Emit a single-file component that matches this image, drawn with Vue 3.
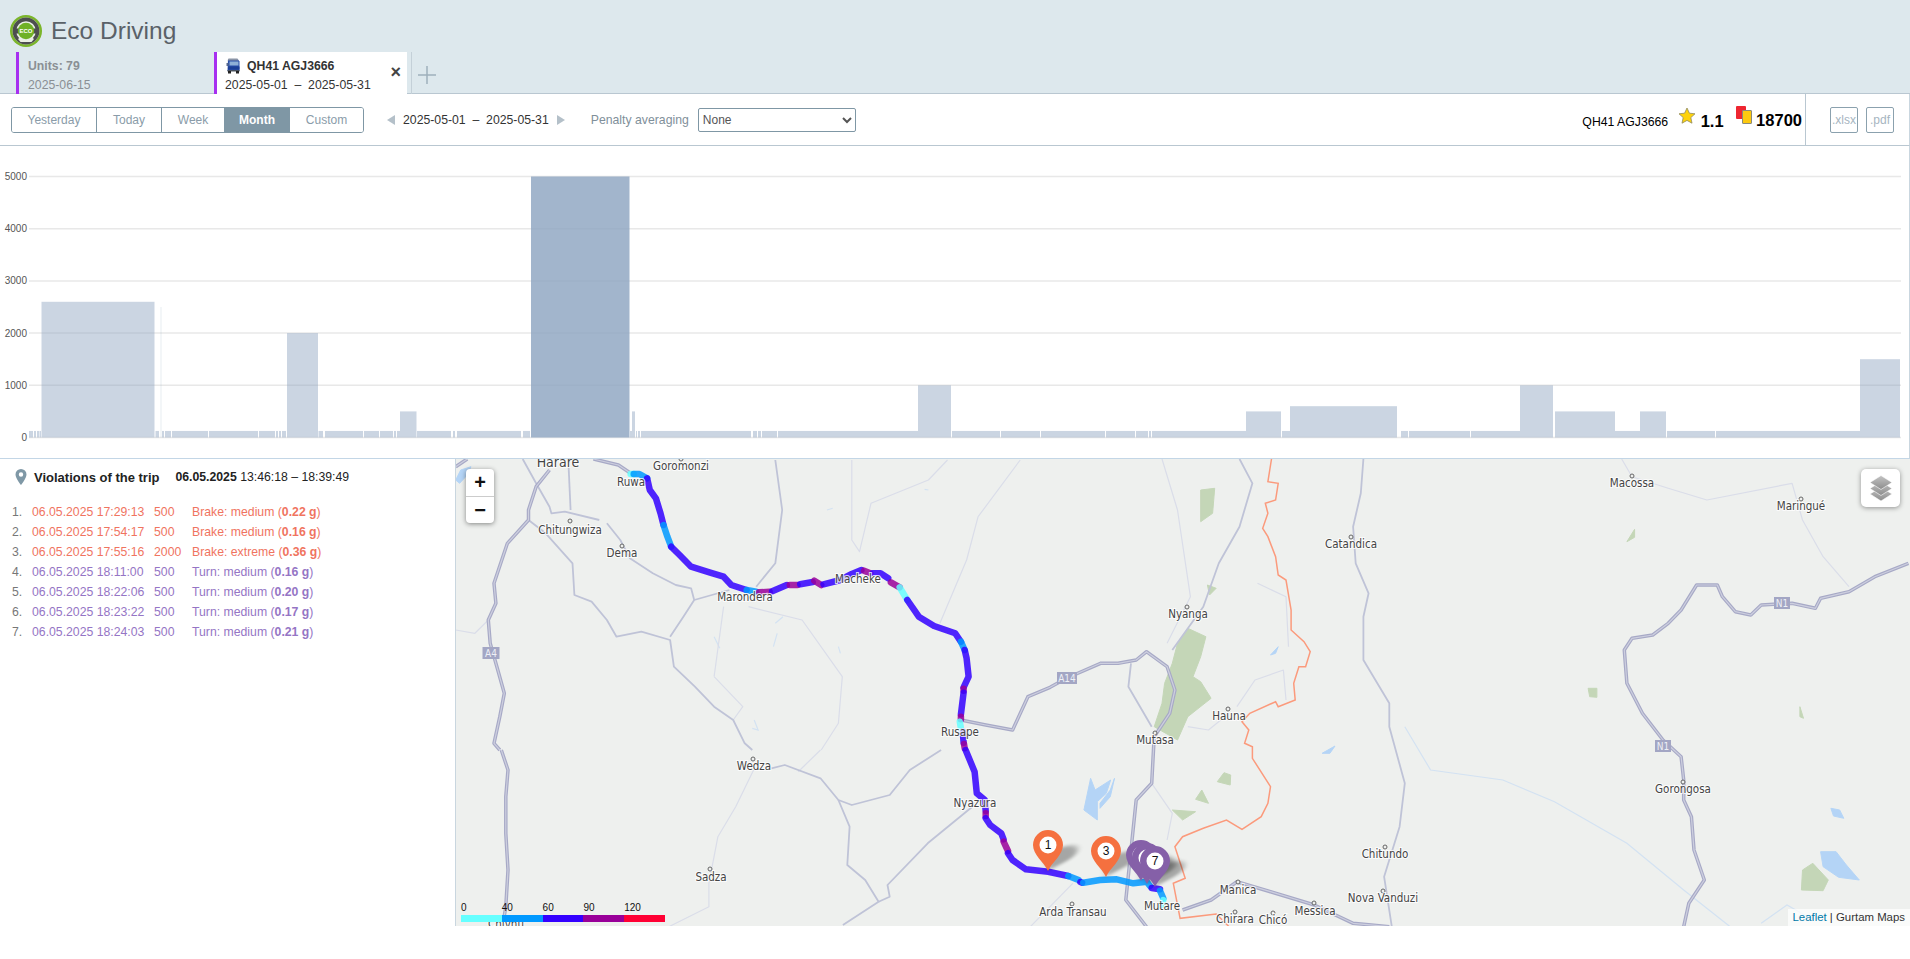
<script setup>
const presets = ["Yesterday", "Today", "Week", "Month", "Custom"];

// chart: value axis is 261px for 5000, base line at y=437.5
const baseY = 437.5;
const toH = (v) => (v / 5000) * 261;
const ticks = [0, 1000, 2000, 3000, 4000, 5000];

const low = [
  [29, 33], [34, 36], [37, 39], [39.5, 41], [155.5, 159], [162, 164], [165, 171], [172, 208],
  [209, 258], [259, 275], [276, 278], [279, 281], [282, 286], [318.5, 323], [325, 363],
  [364, 379], [380, 393], [394, 396], [397, 400], [417, 451], [453, 455], [457, 521], [523, 530],
  [630, 632], [636, 637], [638, 640], [641, 751], [753, 757], [758, 761], [762, 777], [778, 918],
  [952, 1000], [1001, 1040], [1041, 1105], [1106, 1135], [1136, 1148], [1149, 1151], [1152, 1246],
  [1282, 1290], [1401, 1408], [1409, 1470], [1471, 1520], [1615, 1640], [1667, 1715], [1716, 1860],
].map(([x1, x2]) => ({ x1, x2, value: 125 }));

const bars = [
  ...low,
  { x1: 41.5, x2: 154.5, value: 2600 },
  { x1: 160, x2: 162, value: 2500, faint: true },
  { x1: 287, x2: 318, value: 2000 },
  { x1: 400, x2: 416.5, value: 500 },
  { x1: 531, x2: 629.5, value: 5000, active: true },
  { x1: 632, x2: 635, value: 500 },
  { x1: 918, x2: 951, value: 1000 },
  { x1: 1246, x2: 1281, value: 500 },
  { x1: 1290, x2: 1397, value: 600 },
  { x1: 1520, x2: 1553, value: 1000 },
  { x1: 1555, x2: 1615, value: 500 },
  { x1: 1640, x2: 1666, value: 500 },
  { x1: 1860, x2: 1900, value: 1500 },
];

const violations = [
  { n: 1, time: "06.05.2025 17:29:13", pts: 500, label: "Brake: medium", g: "0.22 g", kind: "brake" },
  { n: 2, time: "06.05.2025 17:54:17", pts: 500, label: "Brake: medium", g: "0.16 g", kind: "brake" },
  { n: 3, time: "06.05.2025 17:55:16", pts: 2000, label: "Brake: extreme", g: "0.36 g", kind: "brake" },
  { n: 4, time: "06.05.2025 18:11:00", pts: 500, label: "Turn: medium", g: "0.16 g", kind: "turn" },
  { n: 5, time: "06.05.2025 18:22:06", pts: 500, label: "Turn: medium", g: "0.20 g", kind: "turn" },
  { n: 6, time: "06.05.2025 18:23:22", pts: 500, label: "Turn: medium", g: "0.17 g", kind: "turn" },
  { n: 7, time: "06.05.2025 18:24:03", pts: 500, label: "Turn: medium", g: "0.21 g", kind: "turn" },
];

// map geometry was traced in differently scaled views, these put it back in page px
const view = (ox, oy, sx, sy) => (flat) => {
  const out = [];
  for (let i = 0; i < flat.length; i += 2) {
    out.push(`${(ox + flat[i] / sx).toFixed(1)},${(oy + flat[i + 1] / sy).toFixed(1)}`);
  }
  return out.join(" ");
};
const a = view(450, 450, 2.613, 3);
const b = view(450, 750, 2.24, 3);
const c = view(1000, 800, 3, 3);
const d = view(1100, 450, 1.936, 3);

const mainRoads = [
  a([260, 60, 225, 110, 205, 180, 205, 210, 150, 280, 115, 400, 120, 460, 100, 510, 105, 580, 125, 660, 142, 730, 130, 800, 115, 880, 130, 900]),
  b([115, 0, 130, 60, 125, 140, 125, 250, 130, 360, 125, 470, 120, 510]),
  a([375, 27, 440, 45, 470, 68]),
  a([15, 50, 45, 27]),
  a([1335, 810, 1400, 825, 1470, 840, 1510, 740, 1568, 712, 1612, 684, 1700, 640]),
  d([0, 640, 35, 640, 70, 630, 90, 605, 130, 650, 145, 720, 135, 790, 105, 860, 100, 1000, 70, 1050, 60, 1200, 50, 1350, 90, 1430]),
  d([1565, 340, 1500, 380, 1450, 425, 1395, 445, 1385, 475, 1340, 460, 1280, 465, 1260, 495, 1230, 485, 1205, 440, 1195, 405, 1155, 405, 1125, 480, 1100, 520, 1070, 555, 1030, 565, 1015, 600, 1020, 700, 1050, 790, 1090, 870, 1125, 920, 1130, 990, 1130, 1050, 1145, 1100, 1150, 1200, 1170, 1290, 1140, 1360, 1130, 1430]),
  d([160, 1380, 215, 1350, 265, 1295, 330, 1325, 415, 1365, 490, 1420, 560, 1430]),
];

const secondaryRoads = [
  a([205, 210, 250, 250, 320, 340, 325, 435, 370, 455, 410, 510, 435, 560, 500, 545, 575, 570, 585, 650, 640, 710, 690, 770, 740, 810, 770, 880, 790, 900]),
  a([410, 220, 445, 270, 470, 325, 530, 370, 590, 405, 630, 415, 638, 450, 610, 500, 575, 560]),
  a([638, 450, 730, 420]),
  a([800, 410, 850, 340, 868, 180, 850, 30]),
  a([190, 27, 225, 100, 260, 170, 265, 190, 300, 185, 390, 210]),
  a([310, 50, 315, 180]),
  b([720, 55, 750, 45, 830, 85, 870, 150, 900, 165, 985, 135, 1030, 60, 1100, 0]),
  b([870, 150, 895, 230, 890, 345, 930, 390, 960, 455, 880, 525]),
  b([960, 455, 985, 440, 980, 405, 1070, 280, 1170, 170]),
  d([510, 27, 505, 130, 490, 230, 495, 340, 520, 430, 510, 500, 510, 630, 560, 760, 560, 830, 590, 1000, 580, 1130, 550, 1280, 565, 1430]),
  d([270, 27, 295, 100, 270, 230, 230, 340, 200, 470, 140, 600]),
  d([60, 640, 55, 710, 100, 830]),
];

const minorRoads = [
  a([1050, 30, 1050, 270, 1070, 305, 1100, 160, 1250, 90, 1300, 30]),
  a([1490, 30, 1380, 200, 1350, 330, 1280, 520]),
  a([690, 680, 715, 470]),
  a([690, 680, 765, 770, 740, 810]),
  a([780, 470, 920, 510, 1025, 680, 1015, 820, 970, 900]),
  a([15, 540, 65, 550, 100, 510]),
  b([680, 60, 640, 170, 600, 260, 580, 400, 580, 470, 490, 530]),
  b([780, 65, 830, 0]),
  b([1395, 400, 1300, 530]),
  d([120, 27, 150, 180, 175, 440, 130, 580]),
  d([1010, 27, 1030, 80, 1100, 115, 1175, 150, 1340, 100, 1360, 210, 1400, 320, 1450, 410]),
  d([360, 750, 355, 660, 300, 690, 265, 770]),
  d([305, 400, 360, 440, 365, 590]),
  d([170, 830, 210, 840, 250, 790]),
  d([100, 1000, 140, 1090, 130, 1170]),
];

const rivers = [
  d([590, 830, 640, 960, 780, 990, 880, 1055, 1020, 1180, 1130, 1320, 1220, 1430]),
  d([1280, 1420, 1330, 1365, 1370, 1400]),
  a([850, 520, 870, 500]),
  a([690, 560, 705, 595]),
  a([845, 590, 855, 550]),
  a([1015, 590, 1020, 610]),
  a([795, 810, 805, 840, 790, 835]),
  a([1250, 120, 1240, 118]),
  a([985, 180, 1000, 175]),
];

const border = d([332, 27, 325, 95, 345, 100, 340, 150, 320, 160, 325, 190, 315, 235, 325, 260, 340, 320, 345, 375, 360, 390, 370, 480, 370, 540, 395, 575, 407, 605, 398, 650, 385, 650, 375, 700, 378, 750, 345, 770, 340, 755, 290, 790, 275, 815, 288, 840, 280, 880, 295, 890, 295, 925, 330, 1010, 325, 1060, 312, 1100, 275, 1138, 245, 1110, 200, 1135, 160, 1160, 145, 1190, 165, 1285, 142, 1300, 155, 1405, 225, 1392, 250, 1430]);

const parks = [
  d([170, 535, 205, 560, 195, 620, 180, 680, 195, 695, 215, 745, 170, 800, 150, 870, 105, 830, 120, 760, 125, 700, 140, 640, 150, 580]),
  d([195, 120, 222, 115, 218, 190, 195, 215]),
  d([208, 405, 225, 415, 212, 435]),
  d([240, 968, 253, 975, 252, 1005, 227, 995]),
  d([197, 1020, 210, 1060, 185, 1048]),
  d([945, 715, 962, 715, 962, 742, 948, 740]),
  d([1380, 1240, 1410, 1290, 1400, 1322, 1358, 1320, 1360, 1260]),
  d([1035, 238, 1035, 262, 1020, 275]),
  d([1355, 770, 1362, 805, 1355, 800]),
  d([140, 1080, 185, 1085, 160, 1110]),
];

const lakes = [
  b([1435, 85, 1445, 120, 1480, 90, 1470, 130, 1450, 155, 1450, 210, 1420, 180]),
  d([1395, 1205, 1425, 1205, 1445, 1245, 1470, 1290, 1430, 1282, 1400, 1250]),
  d([1415, 1075, 1432, 1080, 1440, 1105, 1420, 1098]),
  a([15, 90, 28, 60, 55, 50, 45, 75, 25, 100]),
  d([0, 1060, 20, 1020, 28, 985, 20, 1040, 0, 1075]),
  d([430, 910, 455, 888, 445, 910]),
  d([330, 615, 345, 590, 340, 610]),
];

const towns = [
  { name: "Goromonzi", x: 681, y: 470, dot: [681, 459] },
  { name: "Ruwa", x: 631, y: 486 },
  { name: "Chitungwiza", x: 570, y: 534, dot: [570, 521] },
  { name: "Dema", x: 622, y: 557, dot: [622, 546] },
  { name: "Marondera", x: 745, y: 601 },
  { name: "Macheke", x: 858, y: 583 },
  { name: "Rusape", x: 960, y: 736 },
  { name: "Wedza", x: 754, y: 770, dot: [753, 759] },
  { name: "Sadza", x: 711, y: 881, dot: [710, 869] },
  { name: "Nyazura", x: 975, y: 807 },
  { name: "Arda Transau", x: 1073, y: 916, dot: [1072, 904] },
  { name: "Chivhu", x: 506, y: 928 },
  { name: "Manica", x: 1238, y: 894, dot: [1238, 882] },
  { name: "Chirara", x: 1235, y: 923, dot: [1235, 912] },
  { name: "Chicó", x: 1273, y: 924, dot: [1273, 913] },
  { name: "Messica", x: 1315, y: 915, dot: [1314, 903] },
  { name: "Nova Vanduzi", x: 1383, y: 902, dot: [1383, 891] },
  { name: "Chitundo", x: 1385, y: 858, dot: [1385, 847] },
  { name: "Gorongosa", x: 1683, y: 793, dot: [1683, 782] },
  { name: "Hauna", x: 1229, y: 720, dot: [1228, 709] },
  { name: "Mutasa", x: 1155, y: 744, dot: [1155, 733] },
  { name: "Nyanga", x: 1188, y: 618, dot: [1187, 607] },
  { name: "Catandica", x: 1351, y: 548, dot: [1351, 537] },
  { name: "Macossa", x: 1632, y: 487, dot: [1632, 476] },
  { name: "Maringué", x: 1801, y: 510, dot: [1801, 499] },
];

const shields = [
  { name: "A4", x: 491, y: 653, w: 17 },
  { name: "A14", x: 1067, y: 678, w: 20 },
  { name: "N1", x: 1663, y: 746, w: 16 },
  { name: "N1", x: 1782, y: 603, w: 16 },
];

const speed = { cyan: "#66ffff", blue: "#0099ff", indigo: "#3300ff", purple: "#990099" };
const route = [
  ["cyan", a([472, 72, 480, 72])],
  ["blue", a([480, 72, 495, 72, 515, 85])],
  ["indigo", a([515, 85, 522, 120, 538, 145, 550, 190, 558, 225])],
  ["blue", a([558, 225, 568, 260, 578, 290])],
  ["indigo", a([578, 290, 600, 315, 630, 350, 680, 368, 715, 380, 735, 405, 775, 420])],
  ["blue", a([775, 420, 800, 425])],
  ["purple", a([808, 427, 835, 425])],
  ["indigo", a([842, 424, 880, 405])],
  ["purple", a([888, 405, 908, 405])],
  ["indigo", a([915, 403, 948, 396])],
  ["purple", a([952, 392, 970, 405])],
  ["indigo", a([976, 403, 1020, 390, 1050, 372, 1075, 360])],
  ["purple", a([1082, 362, 1098, 370])],
  ["indigo", a([1105, 370, 1125, 370, 1145, 385])],
  ["purple", a([1152, 397, 1175, 412])],
  ["cyan", a([1175, 412, 1195, 450])],
  ["indigo", a([1195, 450, 1225, 500, 1265, 528, 1320, 550, 1335, 575])],
  ["blue", a([1335, 575, 1345, 600])],
  ["indigo", a([1345, 600, 1350, 625, 1355, 680, 1342, 712])],
  ["purple", a([1342, 716, 1342, 722])],
  ["indigo", a([1342, 728, 1335, 793])],
  ["purple", a([1335, 800, 1335, 808])],
  ["cyan", a([1332, 815, 1335, 835])],
  ["indigo", a([1340, 845, 1342, 878])],
  ["purple", a([1343, 882, 1345, 895])],
  ["indigo", b([1155, 0, 1175, 65, 1180, 130, 1198, 150, 1200, 183])],
  ["purple", b([1200, 190, 1200, 198])],
  ["indigo", b([1200, 205, 1210, 225, 1235, 250, 1240, 268])],
  ["purple", b([1240, 275, 1250, 303])],
  ["indigo", b([1250, 310, 1260, 330, 1290, 358, 1340, 365, 1385, 378])],
  ["blue", b([1385, 378, 1408, 390])],
  ["indigo", b([1412, 396, 1416, 398])],
  ["blue", c([250, 248, 300, 240, 350, 238, 400, 250, 440, 245, 450, 258])],
  ["indigo", c([455, 264, 480, 268])],
  ["blue", c([480, 272, 490, 295])],
  ["cyan", c([490, 300, 485, 315])],
];

const pin = "M0 0C-4 -9 -15 -16 -15 -26A15 15 0 1 1 15 -26C15 -16 4 -9 0 0Z";
const markers = [
  { x: 1048, y: 871, color: "#f5703f", label: "1" },
  { x: 1106, y: 877, color: "#f5703f", label: "3" },
  { x: 1141, y: 881, color: "#8560a8", label: "" },
  { x: 1147, y: 884, color: "#8560a8", label: "" },
  { x: 1155, y: 887, color: "#8560a8", label: "7" },
];

const legend = [
  { label: "0", color: "cyan" },
  { label: "40", color: "blue" },
  { label: "60", color: "indigo" },
  { label: "90", color: "purple" },
  { label: "120", color: "red" },
];
</script>

<template>
  <div class="page">
    <header class="header">
      <div class="brand">
        <svg class="logo" viewBox="0 0 32 32" width="32" height="32">
          <circle cx="16" cy="16" r="16" fill="#7bb52b" />
          <circle cx="16" cy="16" r="13.4" fill="#e9efe4" />
          <circle cx="16" cy="16" r="11.6" fill="none" stroke="#4d4f4f" stroke-width="3.6" />
          <path d="M3 13.5h6v5H3zM23 13.5h6v5h-6z" fill="#4d4f4f" />
          <path d="M8 24l4-3h8l4 3-2.5 3h-11z" fill="#e9efe4" />
          <circle cx="16" cy="16" r="8.2" fill="#6fb125" />
          <text x="16" y="18.3" class="logo-text" text-anchor="middle">ECO</text>
        </svg>
        <h1 class="title">Eco Driving</h1>
      </div>
      <div class="tabs">
        <div class="tab tab--idle">
          <div class="tab-name">Units: 79</div>
          <div class="tab-date">2025-06-15</div>
        </div>
        <div class="tab tab--open">
          <div class="tab-name">
            <svg class="truck" viewBox="0 0 17 16" width="17" height="16">
              <path d="M3 1.5h10l1.500 2v9.500h-12z" fill="#2a4fa8" />
              <path d="M3.500 .5h9l1 2h-11z" fill="#8a94a6" />
              <path d="M1.500 5h2v3h-2z" fill="#56698f" />
              <path d="M4.500 3.500h9v4h-9z" fill="#8fb0d6" />
              <path d="M3 8.500h11.500v3H3z" fill="#1c3f96" />
              <path d="M2.500 12h12v1.500h-12z" fill="#49525e" />
              <rect x="3" y="13" width="3" height="2.5" fill="#222" />
              <rect x="11" y="13" width="3" height="2.5" fill="#222" />
            </svg>
            QH41 AGJ3666
          </div>
          <div class="tab-date">2025-05-01 &nbsp;–&nbsp; 2025-05-31</div>
          <span class="tab-close">×</span>
        </div>
        <button class="tab-add" type="button">
          <svg viewBox="0 0 18 18" width="18" height="18">
            <path d="M9 0v18M0 9h18" stroke="#9fb0bc" stroke-width="1.5" fill="none" />
          </svg>
        </button>
      </div>
    </header>

    <div class="toolbar">
      <div class="presets">
        <button
          v-for="p in presets"
          :key="p"
          type="button"
          class="preset"
          :class="[`preset--${p.toLowerCase()}`, { 'preset--on': p === 'Month' }]"
        >
          {{ p }}
        </button>
      </div>
      <div class="range">
        <span class="arrow arrow--left"></span>
        <span>2025-05-01 &nbsp;–&nbsp; 2025-05-31</span>
        <span class="arrow arrow--right"></span>
      </div>
      <label class="penalty">
        Penalty averaging
        <select class="penalty-select">
          <option>None</option>
        </select>
      </label>
      <div class="summary">
        <span class="summary-unit">QH41 AGJ3666</span>
        <svg class="star" viewBox="0 0 18 18" width="18" height="18">
          <path
            d="M9 1l2.400 5.200 5.600.6-4.200 3.800 1.200 5.600L9 13.400l-5 2.800 1.200-5.600L1 6.800l5.600-.6z"
            fill="#fdd20b"
            stroke="#8f8a5e"
            stroke-width=".8"
          />
        </svg>
        <span class="summary-val summary-val--rating">1.1</span>
        <span class="cards">
          <i class="card card--red"></i>
          <i class="card card--yellow"></i>
        </span>
        <span class="summary-val summary-val--penalty">18700</span>
      </div>
      <div class="exports">
        <button type="button" class="export">.xlsx</button>
        <button type="button" class="export">.pdf</button>
      </div>
    </div>

    <section class="chart">
      <svg viewBox="0 146 1910 312" width="1910" height="312">
        <g v-for="t in ticks" :key="t">
          <line x1="29" x2="1901" :y1="baseY - toH(t)" :y2="baseY - toH(t)" class="grid" />
          <text x="27" :y="baseY - toH(t) + 3.5" class="tick" text-anchor="end">{{ t }}</text>
        </g>
        <rect
          v-for="(bar, i) in bars"
          :key="i"
          :x="bar.x1"
          :y="baseY - toH(bar.value)"
          :width="bar.x2 - bar.x1"
          :height="toH(bar.value)"
          class="bar"
          :class="{ 'bar--active': bar.active, 'bar--faint': bar.faint }"
        />
      </svg>
    </section>

    <div class="bottom">
      <aside class="trip">
        <div class="trip-head">
          <svg class="trip-pin" viewBox="0 0 12 16" width="12" height="16">
            <path
              d="M6 0a5.500 5.500 0 0 0-5.500 5.500C.5 9.500 6 16 6 16s5.500-6.500 5.500-10.500A5.500 5.500 0 0 0 6 0zm0 7.700a2.200 2.200 0 1 1 0-4.400 2.200 2.200 0 0 1 0 4.400z"
              fill="#7f98a6"
            />
          </svg>
          <span class="trip-title">Violations of the trip</span>
          <span class="trip-when"><b>06.05.2025</b>&nbsp;13:46:18 – 18:39:49</span>
        </div>
        <div class="rows">
          <div v-for="v in violations" :key="v.n" class="row" :class="`row--${v.kind}`">
            <span class="row-n">{{ v.n }}.</span>
            <span>{{ v.time }}</span>
            <span>{{ v.pts }}</span>
            <span>{{ v.label }} (<b>{{ v.g }}</b>)</span>
          </div>
        </div>
      </aside>

      <div class="map">
        <svg class="map-svg" viewBox="456 459 1454 467" width="1454" height="467">
          <defs>
            <filter id="blur" x="-60%" y="-60%" width="220%" height="220%">
              <feGaussianBlur stdDeviation="3" />
            </filter>
          </defs>
          <g class="basemap">
            <polygon v-for="(p, i) in parks" :key="`park${i}`" :points="p" class="park" />
            <polygon v-for="(p, i) in lakes" :key="`lake${i}`" :points="p" class="lake" />
            <polyline v-for="(p, i) in rivers" :key="`river${i}`" :points="p" class="river" />
            <polyline v-for="(p, i) in minorRoads" :key="`minor${i}`" :points="p" class="road road--minor" />
            <polyline v-for="(p, i) in secondaryRoads" :key="`sec${i}`" :points="p" class="road road--secondary" />
            <polyline :points="border" class="border" />
            <polyline v-for="(p, i) in mainRoads" :key="`mainb${i}`" :points="p" class="road road--main" />
            <polyline v-for="(p, i) in mainRoads" :key="`maini${i}`" :points="p" class="road road--inner" />
          </g>

          <g v-for="s in shields" :key="s.name + s.x">
            <rect :x="s.x - s.w / 2" :y="s.y - 6" :width="s.w" height="12" class="shield" />
            <text :x="s.x" :y="s.y + 3.5" class="shield-text" text-anchor="middle">{{ s.name }}</text>
          </g>

          <polyline
            v-for="(seg, i) in route"
            :key="`seg${i}`"
            :points="seg[1]"
            :stroke="speed[seg[0]]"
            class="route"
          />

          <g v-for="t in towns" :key="t.name">
            <circle v-if="t.dot" :cx="t.dot[0]" :cy="t.dot[1]" r="2" class="town-dot" />
            <text :x="t.x" :y="t.y" class="town" text-anchor="middle">{{ t.name }}</text>
          </g>
          <text x="558" y="467" class="town town--big" text-anchor="middle">Harare</text>
          <text x="1162" y="910" class="town" text-anchor="middle">Mutare</text>

          <path
            v-for="m in markers"
            :key="`shadow${m.x}`"
            :d="pin"
            :transform="`matrix(.85 0 -.55 .62 ${m.x} ${m.y})`"
            class="pin-shadow"
            filter="url(#blur)"
          />
          <g v-for="m in markers" :key="m.x" :transform="`translate(${m.x} ${m.y})`">
            <path :d="pin" :fill="m.color" />
            <circle cy="-26" r="8.5" fill="#fff" />
            <text y="-22" class="pin-label" text-anchor="middle">{{ m.label }}</text>
          </g>
        </svg>

        <div class="zoom">
          <a class="zoom-btn">+</a>
          <a class="zoom-btn">−</a>
        </div>

        <div class="layers">
          <svg viewBox="0 0 28 28" width="28" height="28">
            <defs>
              <linearGradient id="sheet" x1="0" y1="0" x2="0" y2="1">
                <stop offset="0" stop-color="#c4c4c4" />
                <stop offset="1" stop-color="#8c8c8c" />
              </linearGradient>
            </defs>
            <path d="M14 13l11 7-11 7-11-7z" fill="url(#sheet)" stroke="#fff" stroke-width=".6" />
            <path d="M14 7.500l11 7-11 7-11-7z" fill="url(#sheet)" stroke="#fff" stroke-width=".6" />
            <path d="M14 1.500l11 7-11 7-11-7z" fill="url(#sheet)" stroke="#fff" stroke-width=".6" />
          </svg>
        </div>

        <div class="legend">
          <div v-for="l in legend" :key="l.label" class="legend-step">
            <span class="legend-label">{{ l.label }}</span>
            <span class="legend-color" :class="`legend-color--${l.color}`"></span>
          </div>
        </div>

        <div class="attribution"><a class="attribution-link">Leaflet</a> | Gurtam Maps</div>
      </div>
    </div>
  </div>
</template>

<style>
html,
body {
  margin: 0;
  background: #fff;
  overflow: hidden;
}
</style>

<style scoped>
.page {
  height: 959px;
  width: 1910px;
  display: flex;
  flex-direction: column;
  font-family: "Liberation Sans", Arial, sans-serif;
  font-size: 12.25px;
  color: #333;
  overflow: hidden;
}

.header {
  height: 94px;
  box-sizing: border-box;
  background: #dde8ed;
  border-bottom: 1px solid #b9c7d1;
  padding-top: 15px;
}
.brand {
  display: flex;
  align-items: center;
  padding-left: 10px;
  height: 32px;
  gap: 9px;
}
.logo-text {
  font: bold 6px "Liberation Sans", sans-serif;
  fill: #fff;
}
.title {
  margin: 0;
  font-size: 24.5px;
  font-weight: normal;
  color: #5a6168;
}

.tabs {
  display: flex;
  margin: 5px 0 0 16px;
  height: 42px;
}
.tab {
  position: relative;
  box-sizing: border-box;
  border-left: 3px solid #a72ff0;
  padding-left: 9px;
}
.tab--idle {
  width: 198px;
  color: #8a8f94;
}
.tab--open {
  width: 193px;
  background: #fff;
  padding-left: 8px;
  color: #333;
}
.tab-name {
  font-weight: bold;
  height: 23px;
  line-height: 18px;
  padding-top: 5px;
  box-sizing: border-box;
  display: flex;
  align-items: center;
  gap: 5px;
}
.tab-date {
  line-height: 16px;
  margin-top: 2px;
}
.tab-close {
  position: absolute;
  right: 6px;
  top: 10px;
  font-size: 18px;
  line-height: 20px;
  font-weight: bold;
  color: #444;
}
.tab-add {
  border: 0;
  border-left: 1px solid #c4d0d8;
  background: none;
  margin-left: 4px;
  padding: 6px 0 0 6px;
  height: 42px;
  display: block;
}

.toolbar {
  height: 52px;
  box-sizing: border-box;
  border-bottom: 1px solid #b9c7d1;
  border-right: 1px solid #c9d6df;
  display: flex;
  align-items: center;
  padding-left: 11px;
}
.presets {
  display: flex;
  height: 26px;
  box-sizing: border-box;
  border: 1px solid #7f97a5;
  border-radius: 3px;
  width: 353px;
  overflow: hidden;
}
.preset {
  border: 0;
  border-right: 1px solid #7f97a5;
  background: #fff;
  color: #8a9ca9;
  font: 12px "Liberation Sans", Arial, sans-serif;
  padding: 0;
}
.preset--yesterday {
  width: 85px;
}
.preset--today {
  width: 65px;
}
.preset--week {
  width: 62px;
  border-right: 0;
}
.preset--month {
  width: 66px;
  border-right: 0;
}
.preset--custom {
  flex: 1;
  border-right: 0;
}
.preset--on {
  background: #7f97a5;
  color: #fff;
  font-weight: bold;
}
.range {
  display: flex;
  align-items: center;
  margin-left: 23px;
  gap: 8px;
  color: #333;
  white-space: nowrap;
}
.arrow {
  width: 0;
  height: 0;
  border-top: 5px solid transparent;
  border-bottom: 5px solid transparent;
}
.arrow--left {
  border-right: 8px solid #b4c0c9;
}
.arrow--right {
  border-left: 8px solid #b4c0c9;
}
.penalty {
  display: flex;
  align-items: center;
  margin-left: 26px;
  gap: 9px;
  color: #7f8f9a;
}
.penalty-select {
  width: 158px;
  height: 24px;
  box-sizing: border-box;
  border: 1px solid #7f97a5;
  border-radius: 2px;
  background: #fff;
  color: #555;
  font: 12px "Liberation Sans", Arial, sans-serif;
}
.summary {
  margin-left: auto;
  display: flex;
  align-items: center;
  height: 100%;
  color: #000;
  box-sizing: border-box;
  padding-right: 3px;
}
.summary-unit {
  margin-top: 4px;
}
.star {
  margin: -8px 0 0 9.5px;
}
.summary-val {
  font-size: 16.5px;
  font-weight: bold;
}
.summary-val--rating {
  margin: 4px 0 0 5px;
}
.cards {
  position: relative;
  width: 17px;
  height: 18px;
  margin: -9px 0 0 12.5px;
}
.card {
  position: absolute;
  display: block;
  width: 10px;
  height: 13px;
  border-radius: 1px;
  box-sizing: border-box;
}
.card--red {
  left: 0;
  top: 0;
  background: #ee2631;
}
.card--yellow {
  left: 6px;
  top: 4px;
  height: 14px;
  background: #fdc90f;
  border: 1px solid #8a8a7a;
}
.summary-val--penalty {
  margin: 1px 0 0 3px;
}
.exports {
  display: flex;
  align-items: center;
  height: 100%;
  border-left: 1px solid #b9c7d1;
  padding: 0 15px 0 24px;
  gap: 8px;
}
.export {
  width: 28px;
  height: 26px;
  box-sizing: border-box;
  padding: 0;
  border: 1px solid #8ba1ae;
  border-radius: 2px;
  background: #fff;
  color: #a6b5bf;
  font: 12px "Liberation Sans", Arial, sans-serif;
}

.chart {
  height: 313px;
  box-sizing: border-box;
  border-bottom: 1px solid #c3d6e6;
  border-right: 1px solid #c9d6df;
}
.chart svg {
  display: block;
}
.grid {
  stroke: #e8e8e8;
  stroke-width: 1.5;
}
.tick {
  font-size: 10px;
  fill: #555;
}
.bar {
  fill: #8ba2bf;
  opacity: 0.45;
}
.bar--active {
  opacity: 0.8;
}
.bar--faint {
  opacity: 0.1;
}

.bottom {
  display: flex;
  height: 467px;
}
.trip {
  width: 455px;
  flex: none;
  border-right: 1px solid #c9d6df;
  box-sizing: content-box;
}
.trip-head {
  display: flex;
  align-items: center;
  height: 20px;
  margin-top: 8px;
  padding-left: 15px;
}
.trip-title {
  margin-left: 7px;
  font-size: 13px;
  font-weight: bold;
  color: #222;
}
.trip-when {
  margin-left: 16px;
  color: #222;
}
.rows {
  margin-top: 15px;
}
.row {
  display: grid;
  grid-template-columns: 20px 122px 38px auto;
  padding-left: 12px;
  height: 20px;
  line-height: 20px;
}
.row--brake {
  color: #f0745f;
}
.row--turn {
  color: #9575c5;
}
.row-n {
  color: #777;
}

.map {
  position: relative;
  flex: 1;
  overflow: hidden;
  background: #eef0ee;
}
.map-svg {
  display: block;
}
.basemap {
  filter: blur(0.4px);
}
.park {
  fill: #c4d6b7;
  stroke: #c4d6b7;
  stroke-linejoin: round;
  stroke-width: 1;
}
.lake {
  fill: #b4d4f6;
  stroke: #b4d4f6;
  stroke-linejoin: round;
  stroke-width: 1;
}
.river {
  fill: none;
  stroke: #d3e2f2;
  stroke-width: 1.2;
}
.road {
  fill: none;
  stroke-linejoin: round;
}
.road--minor {
  stroke: #dadde9;
  stroke-width: 1.2;
}
.road--secondary {
  stroke: #bfc3d7;
  stroke-width: 1.8;
}
.road--main {
  stroke: #a7a9c6;
  stroke-width: 3.5;
}
.road--inner {
  stroke: #cdcfdf;
  stroke-width: 1.2;
}
.border {
  fill: none;
  stroke: #fb9a7c;
  stroke-width: 1.5;
}
.shield {
  fill: #a3a6c4;
}
.shield-text {
  font: 10px "DejaVu Sans Condensed", "DejaVu Sans", sans-serif;
  fill: #eef0f6;
}
.route {
  fill: none;
  stroke-width: 6.5;
  stroke-linecap: round;
  stroke-linejoin: round;
  stroke-opacity: 0.85;
}
.town {
  font: 11.5px "DejaVu Sans Condensed", "DejaVu Sans", sans-serif;
  fill: #444;
  stroke: rgba(255, 255, 255, 0.8);
  stroke-width: 2px;
  paint-order: stroke;
}
.town--big {
  font-size: 14px;
}
.town-dot {
  fill: #eef0ee;
  stroke: #666;
  stroke-width: 1;
}
.pin-shadow {
  fill: #000;
  opacity: 0.3;
}
.pin-label {
  font: 12px "Liberation Sans", sans-serif;
  fill: #111;
}

.zoom {
  position: absolute;
  left: 10px;
  top: 10px;
  width: 28px;
  background: #fff;
  border-radius: 4px;
  box-shadow: 0 1px 5px rgba(0, 0, 0, 0.45);
}
.zoom-btn {
  display: block;
  height: 26.5px;
  text-align: center;
  font: bold 20px/27px "Liberation Sans", sans-serif;
  color: #111;
}
.zoom-btn:first-child {
  border-bottom: 1px solid #ccc;
}
.layers {
  position: absolute;
  right: 10px;
  top: 10px;
  width: 39px;
  height: 38px;
  background: #fff;
  border-radius: 5px;
  box-shadow: 0 1px 5px rgba(0, 0, 0, 0.4);
  display: flex;
  align-items: center;
  justify-content: center;
}
.legend {
  position: absolute;
  left: 5px;
  bottom: 4px;
  display: flex;
  font-size: 10px;
  color: #111;
}
.legend-step {
  width: 40.8px;
}
.legend-label {
  display: block;
  height: 14px;
  line-height: 13px;
}
.legend-color {
  display: block;
  height: 7px;
}
.legend-color--cyan {
  background: #66ffff;
}
.legend-color--blue {
  background: #0099ff;
}
.legend-color--indigo {
  background: #3300ff;
}
.legend-color--purple {
  background: #990099;
}
.legend-color--red {
  background: #ff0033;
}
.attribution {
  position: absolute;
  right: 0;
  bottom: 0;
  padding: 0 5px;
  line-height: 17px;
  background: rgba(255, 255, 255, 0.7);
  font-size: 11.4px;
  color: #333;
}
.attribution-link {
  color: #0078a8;
}
</style>
